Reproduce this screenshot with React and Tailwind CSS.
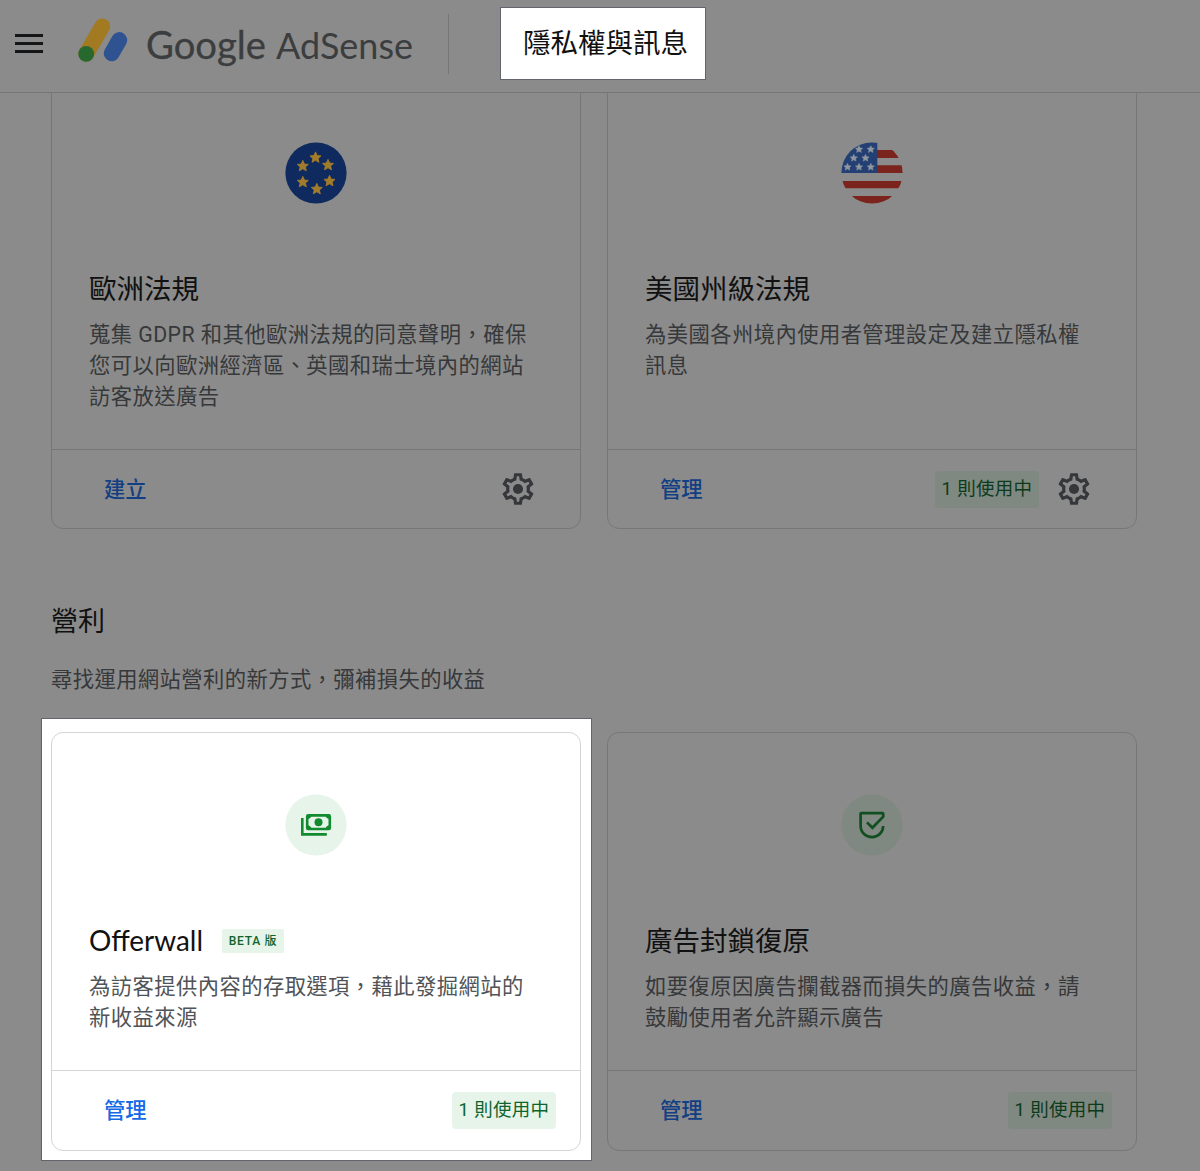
import React from 'react';

const STAR = 'M0 -5.6 L1.65 -1.9 L5.5 -1.6 L2.6 1 L3.5 4.8 L0 2.8 L-3.5 4.8 L-2.6 1 L-5.5 -1.6 L-1.65 -1.9 Z';

function Stars({ points, scale, fill }) {
  return points.map(([x, y]) => (
    <path
      key={`${x}-${y}`}
      d={STAR}
      fill={fill}
      stroke={fill}
      strokeWidth="0.9"
      strokeLinejoin="round"
      transform={`translate(${x} ${y}) scale(${scale})`}
    />
  ));
}

function EuFlag() {
  return (
    <svg className="size-[62px]" viewBox="0 0 62 62">
      <circle cx="31" cy="31" r="30.6" fill="#0f2a5e" />
      <Stars
        fill="#a17c2b"
        scale={1}
        points={[[30.5, 15.5], [43, 23], [44.5, 39], [31.8, 47], [17.8, 40], [17.8, 24]]}
      />
    </svg>
  );
}

function UsFlag() {
  return (
    <svg className="size-[62px]" viewBox="0 0 62 62">
      <defs>
        <clipPath id="us-round"><circle cx="31" cy="31" r="30.6" /></clipPath>
      </defs>
      <g clipPath="url(#us-round)">
        <path fill="#7b241d" d="M36 8h26v8H36zM36 23.3h26v7.7H36zM0 39h62v7.3H0zM0 54h62v8H0z" />
        <path fill="#233f74" d="M0 0h36.3v31H0z" />
        <Stars
          fill="#8f979f"
          scale={0.65}
          points={[[18, 7.3], [29.8, 7.3], [12.8, 16], [24.5, 16], [6.5, 25], [18, 25], [29.8, 25]]}
        />
      </g>
    </svg>
  );
}

function MoneyIcon() {
  return (
    <div className="flex size-[62px] items-center justify-center">
      <svg className="size-[62px]" viewBox="0 0 62 62" fill="none" stroke="#128a2e">
        <circle cx="31" cy="31" r="30.6" fill="#e6f4ea" stroke="none" />
        <path d="M17.3 24V40.4H41.8" strokeWidth="2.6" />
        <rect x="22.2" y="21.4" width="22.6" height="13.6" rx="1" strokeWidth="2.6" />
        <circle cx="33.5" cy="28.2" r="4" fill="#128a2e" stroke="none" />
        <path fill="#128a2e" stroke="none" d="M22 21h4.6a4.4 4.4 0 0 1-4.6 4.2zM45 21h-4.6a4.4 4.4 0 0 0 4.6 4.2zM22 35.4h4.6a4.4 4.4 0 0 0-4.6-4.2zM45 35.4h-4.6a4.4 4.4 0 0 1 4.6-4.2z" />
      </svg>
    </div>
  );
}

function ShieldIcon() {
  return (
    <div className="flex size-[62px] items-center justify-center">
      <svg className="size-[62px]" viewBox="0 0 62 62" fill="none" stroke="#124f20" strokeWidth="2.7">
        <circle cx="31" cy="31" r="30.6" fill="#7f8881" stroke="none" />
        <path d="M42.2 32C42 38.7 37 43.1 31 43.1S19.6 38.7 19.6 31.7V19.8Q19.6 19.1 20.3 19.1H41.4Q42.2 19.1 42.2 19.8V22.8L31.4 33.8L26 28.4" />
      </svg>
    </div>
  );
}

function Gear() {
  return (
    <svg className="size-[38px]" viewBox="0 0 24 24" fill="#35373a">
      <path d="M19.43 12.98c.04-.32.07-.64.07-.98 0-.34-.03-.66-.07-.98l2.11-1.65c.19-.15.24-.42.12-.64l-2-3.46c-.09-.16-.26-.25-.44-.25-.06 0-.12.01-.17.03l-2.49 1c-.52-.4-1.08-.73-1.69-.98l-.38-2.65C14.46 2.18 14.25 2 14 2h-4c-.25 0-.46.18-.49.42l-.38 2.65c-.61.25-1.17.59-1.69.98l-2.49-1c-.06-.02-.12-.03-.18-.03-.17 0-.34.09-.43.25l-2 3.46c-.13.22-.07.49.12.64l2.11 1.65c-.04.32-.07.65-.07.98 0 .33.03.66.07.98l-2.11 1.65c-.19.15-.24.42-.12.64l2 3.46c.09.16.26.25.44.25.06 0 .12-.01.17-.03l2.49-1c.52.4 1.08.73 1.69.98l.38 2.65c.03.24.24.42.49.42h4c.25 0 .46-.18.49-.42l.38-2.65c.61-.25 1.17-.59 1.69-.98l2.49 1c.06.02.12.03.18.03.17 0 .34-.09.43-.25l2-3.46c.12-.22.07-.49-.12-.64l-2.11-1.65zm-1.98-1.71c.04.31.05.52.05.73 0 .21-.02.43-.05.73l-.14 1.13.89.7 1.08.84-.7 1.21-1.27-.51-1.04-.42-.9.68c-.43.32-.84.56-1.25.73l-1.06.43-.16 1.13-.2 1.35h-1.4l-.19-1.35-.16-1.13-1.06-.43c-.43-.18-.83-.41-1.23-.71l-.91-.7-1.06.43-1.27.51-.7-1.21 1.08-.84.89-.7-.14-1.13c-.03-.31-.05-.54-.05-.74s.02-.43.05-.73l.14-1.13-.89-.7-1.08-.84.7-1.21 1.27.51 1.04.42.9-.68c.43-.32.84-.56 1.25-.73l1.06-.43.16-1.13.2-1.35h1.39l.19 1.35.16 1.13 1.06.43c.43.18.83.41 1.23.71l.91.7 1.06-.43 1.27-.51.7 1.21-1.07.85-.89.7.14 1.13z" />
      <circle cx="12" cy="12" r="3.2" />
    </svg>
  );
}

function Card({ icon, title, beta, lines, action, active, gear, lit }) {
  return (
    <article
      className={`flex w-[530px] flex-col rounded-xl border ${lit ? 'border-[#d3d5d8] bg-white' : 'border-[#757779]'}`}
    >
      <div className="flex grow flex-col px-[37px] pt-[61px]">
        <div className="self-center">{icon}</div>
        <div className={`flex h-8 items-center gap-[19px] ${beta ? 'mt-[69px]' : 'mt-[70px]'}`}>
          <h3 className="text-[27.5px] leading-8 text-[#111111]">
            {beta ? (
              <svg className="block h-8 w-[114px] overflow-visible" fill="currentColor">
                <text x="0" y="25.5" textLength="114" lengthAdjust="spacingAndGlyphs" className="font-[Lato,sans-serif] text-[28px]">
                  {title}
                </text>
              </svg>
            ) : title}
          </h3>
          {beta && (
            <span className="flex h-6 w-[62px] items-center justify-center rounded-xs bg-[#e6f4ea] text-[12px] font-medium tracking-[0.7px] whitespace-nowrap text-[#0d652d]">
              {beta}
            </span>
          )}
        </div>
        <p
          className={`text-[21.3px] leading-[31px] tracking-[0.44px] whitespace-nowrap ${beta ? 'mt-[14px]' : 'mt-[13px]'} ${lit ? 'text-[#505357]' : 'text-[#36383a]'}`}
        >
          {lines.map((l) => <span key={l} className="block">{l}</span>)}
        </p>
      </div>
      <footer
        className={`flex items-center justify-between border-t pl-[52px] ${lit ? 'border-[#d3d5d8]' : 'border-[#757779]'} ${gear ? 'h-[79px] pr-[43px]' : 'h-[80px] pr-6'}`}
      >
        <a className={`pt-px text-[21.3px] font-medium ${lit ? 'text-[#1369e6]' : 'text-[#123f83]'}`}>{action}</a>
        <div className="flex items-center gap-4">
          {active && (
            <span className={`flex h-[37px] w-[104px] items-center justify-center rounded-sm pt-px text-[18.5px] tracking-[0.3px] whitespace-nowrap ${lit ? 'bg-[#e6f4ea] text-[#0d652d]' : 'bg-[#7f8881] text-[#0b3b1a]'}`}>
              {active}
            </span>
          )}
          {gear && <Gear />}
        </div>
      </footer>
    </article>
  );
}

function Header() {
  return (
    <header className="flex h-[93px] items-start border-b border-[#747678]">
      <div className="mt-[34px] ml-[15px] flex w-7 flex-col gap-[5px]">
        <i className="h-[3px] bg-[#151617]" />
        <i className="h-[3px] bg-[#151617]" />
        <i className="h-[3px] bg-[#151617]" />
      </div>
      <svg className="mt-[14px] ml-[33px] h-[52px] w-[54px]" viewBox="76 14 54 52" fill="none" strokeLinecap="round">
        <path d="M102.2 26.4 86.2 53.8" stroke="#a27a22" strokeWidth="15.8" />
        <circle cx="86.2" cy="53.9" r="7.9" fill="#27682f" />
        <path d="M119.3 40 111.7 53.4" stroke="#2f5391" strokeWidth="15.8" />
      </svg>
      <svg className="mt-[14px] ml-[17px] h-[56px] w-[268px] overflow-visible" viewBox="147 14 268 56" fill="#3b3d3f">
        <text x="146" y="58.5" textLength="120" lengthAdjust="spacingAndGlyphs" className="font-[Lato,sans-serif] text-[38px]" stroke="#3b3d3f" strokeWidth="0.3">Google</text>
        <text x="276" y="58.5" textLength="137" lengthAdjust="spacingAndGlyphs" className="font-[Lato,sans-serif] text-[36px]">AdSense</text>
      </svg>
      <div className="mt-[14px] ml-[33px] h-[60px] w-px bg-[#747678]" />
      <h1 className="mt-[7px] ml-[51px] flex h-[73px] w-[206px] items-center justify-center border-[1.5px] border-[#62646e] bg-white pt-px pl-[5px] text-[27.5px] text-[#111111]">
        隱私權與訊息
      </h1>
    </header>
  );
}

export default function App() {
  return (
    <div lang="zh-TW" className="h-[1171px] w-[1200px] overflow-hidden bg-[#8b8b8b] font-[Roboto,'Noto_Sans_CJK_TC',sans-serif]">
      <Header />
      <main className="h-[1078px] overflow-hidden">
        <section className="-mt-[13px] ml-[51px] flex h-[449px] gap-[26px]">
          <Card
            icon={<EuFlag />}
            title="歐洲法規"
            lines={['蒐集 GDPR 和其他歐洲法規的同意聲明，確保', '您可以向歐洲經濟區、英國和瑞士境內的網站', '訪客放送廣告']}
            action="建立"
            gear
          />
          <Card
            icon={<UsFlag />}
            title="美國州級法規"
            lines={['為美國各州境內使用者管理設定及建立隱私權', '訊息']}
            action="管理"
            active="1 則使用中"
            gear
          />
        </section>
        <h2 className="mt-[77px] ml-[51px] text-[27px] leading-8 text-[#111111]">營利</h2>
        <p className="mt-[26px] ml-[51px] text-[21.3px] leading-[31px] tracking-[0.42px] text-[#36383a]">
          尋找運用網站營利的新方式，彌補損失的收益
        </p>
        <section className="mt-[23px] ml-[41px] flex items-start gap-[15px]">
          <div className="flex h-[443px] w-[551px] border-[1.5px] border-[#62646e] bg-white px-[9px] pt-[13px] pb-[9px]">
            <Card
              lit
              icon={<MoneyIcon />}
              title="Offerwall"
              beta="BETA 版"
              lines={['為訪客提供內容的存取選項，藉此發掘網站的', '新收益來源']}
              action="管理"
              active="1 則使用中"
            />
          </div>
          <div className="mt-[14px] flex h-[419px]">
            <Card
              icon={<ShieldIcon />}
              title="廣告封鎖復原"
              lines={['如要復原因廣告攔截器而損失的廣告收益，請', '鼓勵使用者允許顯示廣告']}
              action="管理"
              active="1 則使用中"
            />
          </div>
        </section>
      </main>
    </div>
  );
}
